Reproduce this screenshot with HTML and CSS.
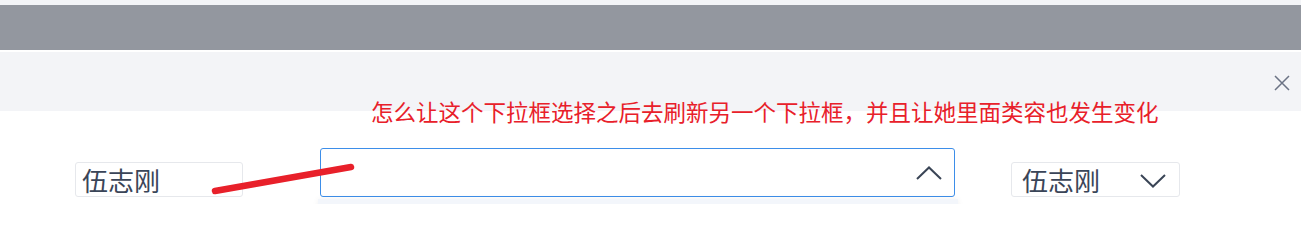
FILE: index.html
```html
<!DOCTYPE html>
<html lang="zh">
<head>
<meta charset="utf-8">
<title>下拉框</title>
<link rel="stylesheet" href="styles.css">
</head>
<body>
<div class="page">
  <div class="top-strip"></div>
  <div class="bar"></div>
  <div class="header">
    <svg class="close" width="16" height="16" viewBox="0 0 16 16"><path d="M1 1L15 15M15 1L1 15" stroke="#6b7385" stroke-width="1.5" fill="none"/></svg>
  </div>
  <div class="content">
    <p class="note">怎么让这个下拉框选择之后去刷新另一个下拉框，并且让她里面类容也发生变化</p>
    <div class="row">
      <div class="box box-left">伍志刚</div>
      <div class="box box-mid">
        <svg class="chev" width="26" height="14" viewBox="0 0 26 14"><path d="M1 13L13 1.5L25 13" stroke="#3a4556" stroke-width="2" fill="none"/></svg>
      </div>
      <div class="box box-right">伍志刚
        <svg class="chev" width="26" height="14" viewBox="0 0 26 14"><path d="M1 1L13 12.5L25 1" stroke="#3a4556" stroke-width="2" fill="none"/></svg>
      </div>
    </div>
    <div class="dropdown"></div>
    <svg class="scribble" width="150" height="40" viewBox="0 0 150 40"><path d="M6 33L142 9" stroke="#e8202a" stroke-width="6.5" stroke-linecap="round" fill="none"/></svg>
  </div>
</div>
</body>
</html>
```

FILE: styles.css
```css
html, body {
  margin: 0;
  padding: 0;
  background: #ffffff;
  overflow: hidden;
}
.page {
  width: 1301px;
  height: 204px;
  position: relative;
  overflow: hidden;
  font-family: "Noto Sans CJK SC", "Noto Sans", sans-serif;
}
.top-strip {
  height: 5px;
  background: #f3f4f7;
}
.bar {
  height: 45px;
  background: #93979f;
  border-bottom: 2px solid #ffffff;
}
.header {
  height: 59px;
  background: #f3f4f7;
  display: flex;
  justify-content: flex-end;
  align-items: center;
  padding-right: 11px;
}
.close {
  display: block;
  margin-top: 3px;
}
.content {
  position: relative;
  height: 93px;
}
.note {
  position: absolute;
  left: 371px;
  top: -15px;
  margin: 0;
  font-size: 22.5px;
  line-height: 30px;
  color: #e8202a;
  white-space: nowrap;
}
.row {
  display: flex;
  align-items: flex-end;
  padding-top: 37px;
  padding-left: 75px;
}
.box {
  box-sizing: border-box;
  display: flex;
  align-items: center;
  font-size: 26px;
  color: #3a4558;
  background: #ffffff;
  border: 1px solid #e6e8ec;
  border-radius: 3px;
}
.box-left {
  width: 168px;
  height: 35px;
  padding-left: 6px;
}
.box-mid {
  width: 635px;
  height: 49px;
  margin-left: 77px;
  border-color: #3d8ee9;
  justify-content: flex-end;
  padding-right: 12px;
}
.box-right {
  width: 169px;
  height: 35px;
  margin-left: 56px;
  padding-left: 10px;
  padding-right: 13px;
  justify-content: space-between;
}
.box-right .chev {
  margin-top: 2px;
}
.chev {
  display: block;
}
.dropdown {
  position: absolute;
  left: 318px;
  top: 88px;
  width: 640px;
  height: 20px;
  background: #f3f6fb;
  box-shadow: 0 0 6px rgba(0, 0, 0, 0.06);
}
.scribble {
  position: absolute;
  left: 209px;
  top: 47px;
}
```
